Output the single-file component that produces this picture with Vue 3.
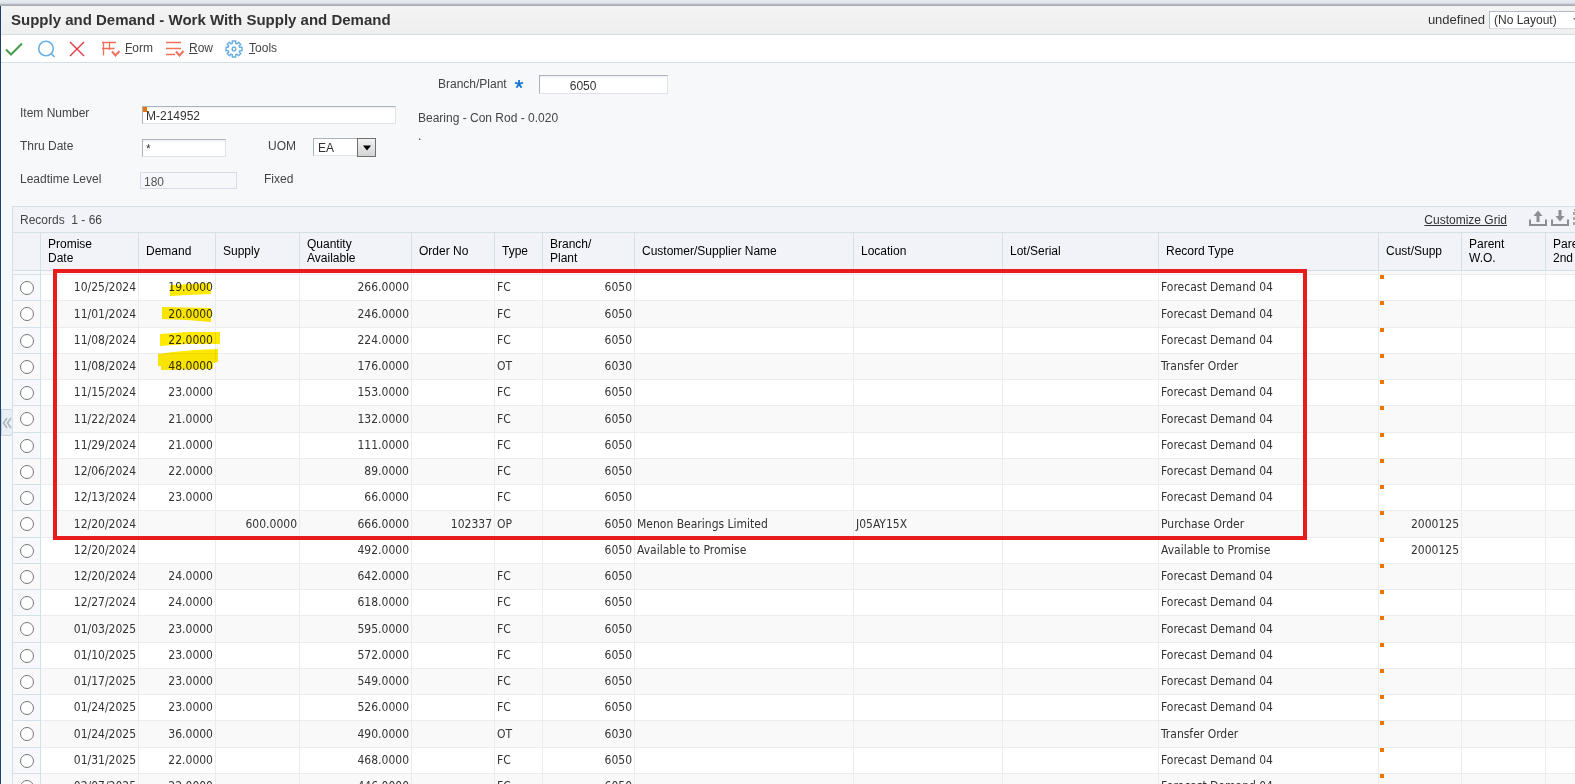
<script setup>
import { ref } from 'vue'

const selected = ref(null)

const columns = [
  { label: ['Promise', 'Date'], width: 'w-date' },
  { label: ['Demand'], width: 'w-demand' },
  { label: ['Supply'], width: 'w-supply' },
  { label: ['Quantity', 'Available'], width: 'w-qty' },
  { label: ['Order No'], width: 'w-order' },
  { label: ['Type'], width: 'w-type' },
  { label: ['Branch/', 'Plant'], width: 'w-branch' },
  { label: ['Customer/Supplier Name'], width: 'w-name' },
  { label: ['Location'], width: 'w-location' },
  { label: ['Lot/Serial'], width: 'w-lot' },
  { label: ['Record Type'], width: 'w-record' },
  { label: ['Cust/Supp'], width: 'w-cust' },
  { label: ['Parent', 'W.O.'], width: 'w-parent' },
  { label: ['Parent', '2nd Item'], width: 'w-rest' }
]

const forecast = (date, demand, available) => ({
  date, demand, available, type: 'FC', branch: '6050', record: 'Forecast Demand 04'
})
const transfer = (date, demand, available) => ({
  date, demand, available, type: 'OT', branch: '6030', record: 'Transfer Order'
})

const rows = [
  forecast('10/25/2024', '19.0000', '266.0000'),
  forecast('11/01/2024', '20.0000', '246.0000'),
  forecast('11/08/2024', '22.0000', '224.0000'),
  transfer('11/08/2024', '48.0000', '176.0000'),
  forecast('11/15/2024', '23.0000', '153.0000'),
  forecast('11/22/2024', '21.0000', '132.0000'),
  forecast('11/29/2024', '21.0000', '111.0000'),
  forecast('12/06/2024', '22.0000', '89.0000'),
  forecast('12/13/2024', '23.0000', '66.0000'),
  {
    date: '12/20/2024', supply: '600.0000', available: '666.0000', order: '102337', type: 'OP',
    branch: '6050', name: 'Menon Bearings Limited', location: 'J05AY15X',
    record: 'Purchase Order', cust: '2000125'
  },
  {
    date: '12/20/2024', available: '492.0000', branch: '6050', name: 'Available to Promise',
    record: 'Available to Promise', cust: '2000125'
  },
  forecast('12/20/2024', '24.0000', '642.0000'),
  forecast('12/27/2024', '24.0000', '618.0000'),
  forecast('01/03/2025', '23.0000', '595.0000'),
  forecast('01/10/2025', '23.0000', '572.0000'),
  forecast('01/17/2025', '23.0000', '549.0000'),
  forecast('01/24/2025', '23.0000', '526.0000'),
  transfer('01/24/2025', '36.0000', '490.0000'),
  forecast('01/31/2025', '22.0000', '468.0000'),
  forecast('02/07/2025', '22.0000', '446.0000')
]
</script>

<template>
  <div class="page">
    <div class="top-strip"></div>
    <div class="shell">
      <header class="title-bar">
        <h1>Supply and Demand - Work With Supply and Demand</h1>
        <div class="layout-picker">
          <label for="layout">undefined</label>
          <div class="layout-box">
            <select id="layout"><option>(No Layout)</option></select>
            <svg width="8" height="6" viewBox="0 0 8 6"><path d="M0 1h7L3.500 5z" fill="#777" /></svg>
          </div>
        </div>
      </header>

      <nav class="toolbar">
        <button type="button" class="tool check" aria-label="Select">
          <svg width="18" height="18" viewBox="0 0 18 18" fill="none" stroke="#479a49" stroke-width="2">
            <path d="M1 9.500L6 14.500L17 3.500" />
          </svg>
        </button>
        <button type="button" class="tool find" aria-label="Find">
          <svg width="18" height="18" viewBox="0 0 18 18" fill="none" stroke="#69b0e4" stroke-width="1.600">
            <circle cx="9" cy="8.500" r="7.300" /><path d="M13.800 13.300L17.500 17" />
          </svg>
        </button>
        <button type="button" class="tool close" aria-label="Close">
          <svg width="18" height="18" viewBox="0 0 18 18" fill="none" stroke="#e0383e" stroke-width="1.400">
            <path d="M2 2L16 16M16 2L2 16" />
          </svg>
        </button>
        <button type="button" class="tool form-menu">
          <svg width="20" height="18" viewBox="0 0 20 18" fill="none" stroke="#f0705c" stroke-width="1.300">
            <path d="M2 2.500H16M3.500 2V15.500M2 8.500H14.500M9.500 2.500V10" />
            <path d="M12 11.500L15.500 15.500L19.500 11" stroke-width="2" />
          </svg>
          <span><u>F</u>orm</span>
        </button>
        <button type="button" class="tool row-menu">
          <svg width="20" height="18" viewBox="0 0 20 18" fill="none" stroke="#f0705c" stroke-width="1.300">
            <path d="M1 2.500H16M1 8.500H16M1 14.500H10" />
            <path d="M11 11.500L14.500 15.500L18.500 11" stroke-width="2" />
          </svg>
          <span><u>R</u>ow</span>
        </button>
        <button type="button" class="tool tools-menu">
          <svg width="18" height="18" viewBox="0 0 18 18" fill="none" stroke="#69b0e4" stroke-width="1.400">
            <path d="M7.300 1h3.400v2.200l1.300.6 1.600-1.600 2.200 2.200-1.600 1.600.6 1.300H17v3.400h-2.200l-.6 1.300 1.600 1.600-2.200 2.200-1.600-1.600-1.300.6V17H7.300v-2.200L6 14.200l-1.600 1.600-2.200-2.200L3.800 12l-.6-1.300H1V7.300h2.200L3.800 6 2.200 4.400l2.200-2.200L6 3.800l1.300-.6z" />
            <rect x="7.300" y="7.300" width="3.400" height="3.400" rx="1" />
          </svg>
          <span><u>T</u>ools</span>
        </button>
      </nav>

      <form class="filters" @submit.prevent>
        <div class="filter-left">
          <div class="field-row">
            <label for="item">Item Number</label>
            <div class="marked item">
              <input id="item" type="text" value="M-214952" />
              <i class="marker"></i>
            </div>
          </div>
          <div class="field-row">
            <label for="thru">Thru Date</label>
            <input id="thru" class="thru" type="text" value="*" />
            <label for="uom" class="uom-label">UOM</label>
            <div class="uom">
              <select id="uom"><option>EA</option></select>
              <span class="uom-arrow" aria-hidden="true">
                <svg width="10" height="6" viewBox="0 0 10 6"><path d="M1 0.500H9L5 5.500z" fill="#000" /></svg>
              </span>
            </div>
          </div>
          <div class="field-row">
            <label for="lead">Leadtime Level</label>
            <input id="lead" class="lead" type="text" value="180" readonly />
            <span class="fixed-label">Fixed</span>
          </div>
        </div>
        <div class="filter-right">
          <div class="branch-row">
            <label for="branch">Branch/Plant</label>
            <svg class="required" width="10" height="12" viewBox="0 0 10 12" stroke="#1673d1" stroke-width="1.800">
              <path d="M5 5V1M5 5L1 3.700M5 5L9 3.700M5 5L2.500 8.700M5 5L7.500 8.700" />
            </svg>
            <input id="branch" class="branch" type="text" value="6050" />
          </div>
          <div class="description">Bearing - Con Rod - 0.020</div>
          <div class="description-2">.</div>
        </div>
      </form>

      <section class="grid-area">
        <button type="button" class="collapse" aria-label="Collapse">
          <svg width="10" height="12" viewBox="0 0 10 12" fill="none" stroke="#a9b4be" stroke-width="1.500">
            <path d="M5 1L1.500 6L5 11M9 1L5.500 6L9 11" />
          </svg>
        </button>
        <div class="grid-box">
          <div class="grid-bar">
            <span class="records">Records&nbsp; 1 - 66</span>
            <div class="grid-actions">
              <a href="#">Customize Grid</a>
              <button type="button" aria-label="Import">
                <svg width="18" height="16" viewBox="0 0 18 16" fill="none" stroke="#8b8f92" stroke-width="2">
                  <path d="M1 9.500V15H17V9.500" /><path d="M9 12V4" stroke-width="3" /><path d="M4.500 6L9 0.500L13.500 6z" fill="#8b8f92" stroke="none" />
                </svg>
              </button>
              <button type="button" aria-label="Export">
                <svg width="18" height="16" viewBox="0 0 18 16" fill="none" stroke="#8b8f92" stroke-width="2">
                  <path d="M1 9.500V15H17V9.500" /><path d="M9 0V7" stroke-width="3" /><path d="M4.500 6L9 11.500L13.500 6z" fill="#8b8f92" stroke="none" />
                </svg>
              </button>
              <button type="button" aria-label="Maximize">
                <svg width="16" height="18" viewBox="0 0 16 18" fill="none" stroke="#8b8f92" stroke-width="1.500">
                  <rect x="1" y="1" width="14" height="16" stroke-dasharray="3 2" />
                </svg>
              </button>
            </div>
          </div>

          <table>
            <colgroup>
              <col class="w-pick" />
              <col v-for="(c, i) in columns" :key="i" :class="c.width" />
            </colgroup>
            <thead>
              <tr>
                <th aria-label="Select"></th>
                <th v-for="(c, i) in columns" :key="i" scope="col">
                  <template v-for="(line, n) in c.label" :key="n"><br v-if="n" />{{ line }}</template>
                </th>
              </tr>
            </thead>
            <tbody class="spacer" aria-hidden="true">
              <tr><td v-for="n in 15" :key="n"></td></tr>
            </tbody>
            <tbody class="records-body">
              <tr v-for="(r, i) in rows" :key="i">
                <td class="pick">
                  <input v-model="selected" type="radio" name="record" :value="i" :aria-label="'Select record ' + (i + 1)" />
                </td>
                <td class="num">{{ r.date }}</td>
                <td class="num">{{ r.demand }}</td>
                <td class="num">{{ r.supply }}</td>
                <td class="num">{{ r.available }}</td>
                <td class="num">{{ r.order }}</td>
                <td>{{ r.type }}</td>
                <td class="num">{{ r.branch }}</td>
                <td>{{ r.name }}</td>
                <td>{{ r.location }}</td>
                <td></td>
                <td>{{ r.record }}</td>
                <td class="num cust"><i class="marker"></i>{{ r.cust }}</td>
                <td></td>
                <td></td>
              </tr>
            </tbody>
          </table>

          <svg class="highlights" width="80" height="100" viewBox="0 0 80 100" fill="#ffe900">
            <path d="M17 12L57 10L58 21L34 22L17 23z" />
            <path d="M9 34L58 35V49L34 47L9 46z" />
            <path d="M7 61L34 59H67V71L34 71L7 73z" />
            <path d="M5 81L20 79L42 77L65 76V89L60 90V96L8 97V93H5z" />
          </svg>
          <div class="callout"></div>
        </div>
      </section>
    </div>
  </div>
</template>

<style>
body {
  background: #f6f7fa;
}
</style>

<style scoped>
* {
  box-sizing: border-box;
}
.page {
  display: flex;
  flex-direction: column;
  height: 100vh;
  overflow: hidden;
  font: 12px/14px "Liberation Sans", Arial, sans-serif;
  color: #444;
  background: #f6f8fa;
}
.top-strip {
  flex: none;
  height: 6px;
  background: linear-gradient(#e4eaf0 0 1px, #dce4ea 3px, #c8ccd2 4px, #a0a2aa 5px, #b4b6ba);
}
.shell {
  flex: 1;
  min-height: 0;
  display: flex;
  flex-direction: column;
  border-left: 1px solid #1d416e;
}
.title-bar {
  flex: none;
  height: 29px;
  display: flex;
  align-items: center;
  justify-content: space-between;
  padding-left: 10px;
  border-bottom: 1px solid #d5dfe6;
  background: linear-gradient(#f4f4f4, #efefef);
  overflow: hidden;
}
h1 {
  margin: 0;
  font-size: 15px;
  line-height: 20px;
  color: #333;
}
.layout-picker {
  display: flex;
  align-items: center;
  gap: 4px;
  margin-right: -8px;
  color: #333;
  font-size: 13px;
}
.layout-box {
  display: flex;
  align-items: center;
  width: 94px;
  height: 18px;
  padding-right: 1px;
  background: #fff;
  border: 1px solid #b4bac4;
  border-bottom-color: #d9dde3;
}
select {
  flex: 1;
  min-width: 0;
  height: 16px;
  padding: 0 4px;
  appearance: none;
  border: 0;
  border-radius: 0;
  background: #fff;
  color: #333;
  font: inherit;
  font-size: 12px;
}
.toolbar {
  flex: none;
  height: 28px;
  display: flex;
  align-items: center;
  padding-left: 4px;
  background: #fff;
  border-bottom: 1px solid #d5dfe6;
}
.tool {
  display: flex;
  align-items: center;
  gap: 4px;
  padding: 0;
  border: 0;
  background: none;
  color: #444;
  font: inherit;
}
.tool span {
  padding-bottom: 2px;
}
.find,
.form-menu {
  margin-left: 14px;
}
.close {
  margin-left: 13px;
}
.tools-menu {
  gap: 6px;
}
.form-menu {
  gap: 5px;
}
.row-menu,
.tools-menu {
  margin-left: 12px;
}
.filters {
  flex: none;
  display: flex;
  padding-left: 19px;
  height: 143px;
}
.filter-left {
  width: 398px;
  padding-top: 35px;
}
.field-row {
  display: flex;
  align-items: center;
  height: 33px;
}
.field-row > label,
.fixed-label {
  padding-bottom: 4px;
}
.field-row > label:first-child {
  width: 122px;
}
input[type='text'] {
  height: 18px;
  padding: 2px 3px 0;
  border: 1px solid #e0e2e8;
  border-top-color: #acb1bb;
  border-left-color: #acb1bb;
  border-radius: 0;
  background: linear-gradient(#eef0f3, #fff 3px);
  color: #333;
  font: inherit;
  outline: none;
}
.marked {
  position: relative;
  display: flex;
}
.item input {
  width: 254px;
}
.marker {
  position: absolute;
  top: 0;
  left: 1px;
  width: 4px;
  height: 4px;
  background: #ea7600;
}
.marked .marker {
  top: 1px;
  height: 5px;
}
.thru {
  width: 84px;
}
.uom-label {
  width: 45px;
  margin-left: 42px;
}
.uom {
  display: flex;
  width: 63px;
  height: 19px;
}
.uom select {
  height: 18px;
  padding-top: 1px;
  border: 1px solid #acb1bb;
  border-right: 0;
  border-bottom-color: #e0e2e8;
}
.uom-arrow {
  display: grid;
  place-items: center;
  width: 19px;
  border: 1px solid #707070;
  background: linear-gradient(#f2f2f2, #d4d4d4);
}
.field-row .lead {
  width: 97px;
  height: 17px;
  margin-left: -2px;
  background: #f6f7fa;
  border-color: #d9dbe6;
  color: #555;
}
.fixed-label {
  margin-left: 27px;
}
.branch-row {
  display: flex;
  align-items: center;
  height: 43px;
  padding-left: 20px;
}
.branch-row label {
  padding-bottom: 1px;
}
.required {
  margin: 0 15px 0 7px;
}
.branch-row .branch {
  width: 129px;
  height: 19px;
  padding-left: 30px;
}
.description {
  margin-top: 5px;
}
.description-2 {
  margin-top: 4px;
}
.grid-area {
  position: relative;
  flex: 1;
  min-height: 0;
  padding-left: 11px;
}
.collapse {
  position: absolute;
  top: 203px;
  left: 0;
  display: grid;
  place-items: center;
  width: 12px;
  height: 27px;
  padding: 0;
  border: 1px solid #c9d3dc;
  border-radius: 0 3px 3px 0;
  background: #e9eff5;
}
.grid-box {
  position: relative;
  height: 100%;
  overflow: hidden;
  border-top: 1px solid #d5dfe6;
  border-left: 1px solid #d5dfe6;
}
.grid-bar {
  display: flex;
  align-items: center;
  justify-content: space-between;
  height: 26px;
  padding-left: 7px;
  background: #f1f3f8;
  border-bottom: 1px solid #d5dfe6;
}
.grid-actions {
  display: flex;
  align-items: center;
  margin-right: -14px;
}
.grid-actions a {
  margin-right: 22px;
  color: #333;
}
.grid-actions button {
  display: flex;
  margin-right: 4px;
  padding: 0 0 3px;
  border: 0;
  background: none;
}
.grid-actions button:last-child {
  margin-right: 0;
}
table {
  width: 100%;
  min-width: 1624px;
  table-layout: fixed;
  border-collapse: separate;
  border-spacing: 0;
}
.w-pick { width: 28px; }
.w-date { width: 98px; }
.w-demand { width: 77px; }
.w-supply { width: 84px; }
.w-qty { width: 112px; }
.w-order { width: 83px; }
.w-type { width: 48px; }
.w-branch { width: 92px; }
.w-name { width: 219px; }
.w-location { width: 149px; }
.w-lot { width: 156px; }
.w-record { width: 220px; }
.w-cust { width: 83px; }
.w-parent { width: 84px; }
th {
  height: 38px;
  padding: 0 7px 2px;
  text-align: left;
  font-weight: 400;
  color: #000;
  background: #f1f3f8;
  border-right: 1px solid #d5dfe6;
  border-bottom: 1px solid #d5dfe6;
}
td {
  padding: 0 2px;
  border-right: 1px solid #ececec;
  border-bottom: 1px solid #ececec;
  white-space: nowrap;
}
.spacer td {
  height: 4px;
  background: #f9f9f9;
}
.records-body td {
  height: 26px;
  padding-bottom: 1px;
  background: #fff;
  font-family: "DejaVu Sans Condensed", "Noto Sans", sans-serif;
  color: #333;
}
.records-body tr:nth-child(4n + 2) td {
  height: 27px;
}
.records-body tr:nth-child(even) td {
  background: #f9f9f9;
}
.records-body .num {
  text-align: right;
}
.records-body .cust {
  position: relative;
}
.records-body tr .pick,
.spacer td:first-child {
  padding: 0 0 0 1px;
  background: #f6f8fc;
  border-color: #d5dfe6;
}
.pick input {
  display: block;
  width: 14px;
  height: 14px;
  margin: 0 auto;
}
.highlights {
  position: absolute;
  top: 66px;
  left: 140px;
  mix-blend-mode: multiply;
  pointer-events: none;
}
.callout {
  position: absolute;
  top: 62px;
  left: 40px;
  width: 1254px;
  height: 271px;
  border: 4px solid #e81c1c;
  pointer-events: none;
}
</style>
